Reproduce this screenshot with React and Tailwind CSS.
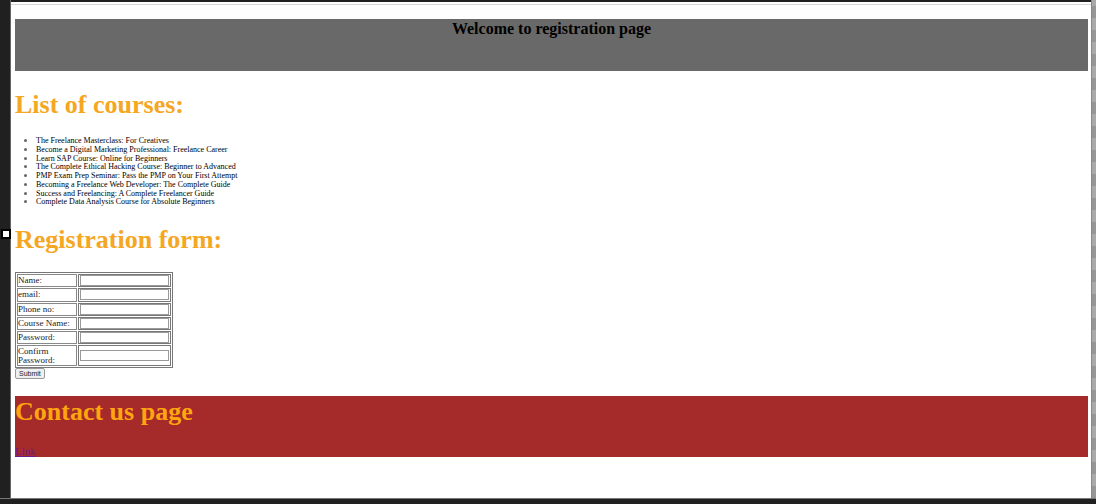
const courses = [
  'The Freelance Masterclass: For Creatives',
  'Become a Digital Marketing Professional: Freelance Career',
  'Learn SAP Course: Online for Beginners',
  'The Complete Ethical Hacking Course: Beginner to Advanced',
  'PMP Exam Prep Seminar: Pass the PMP on Your First Attempt',
  'Becoming a Freelance Web Developer: The Complete Guide',
  'Success and Freelancing: A Complete Freelancer Guide',
  'Complete Data Analysis Course for Absolute Beginners',
];

const fields = [
  { id: 'name', label: 'Name:', type: 'text' },
  { id: 'email', label: 'email:', type: 'email' },
  { id: 'phone', label: 'Phone no:', type: 'tel' },
  { id: 'course', label: 'Course Name:', type: 'text' },
  { id: 'password', label: 'Password:', type: 'password' },
  { id: 'confirm', label: 'Confirm Password:', type: 'password' },
];

function Heading({ children }) {
  return <h1 className="text-[26px] leading-8 font-bold text-[#f5a623]">{children}</h1>;
}

function RegistrationForm() {
  return (
    <form className="mt-4" onSubmit={(e) => e.preventDefault()}>
      <table className="h-[96px] w-[158px] table-fixed border-separate border-spacing-px border border-[#777]">
        <tbody>
          {fields.map((f) => (
            <tr key={f.id}>
              <td className="w-[60px] border border-[#888] align-middle leading-[9px]">
                <label htmlFor={f.id} className="block">{f.label}</label>
              </td>
              <td className="border border-[#777] px-px align-middle">
                <input
                  id={f.id}
                  type={f.type}
                  className="block h-[11px] w-full border border-[#999] bg-white px-px text-[8px] outline-none"
                />
              </td>
            </tr>
          ))}
        </tbody>
      </table>
      <button
        type="submit"
        className="block h-[11px] rounded-xs border border-[#999] bg-[#efefef] px-[3px] font-['Liberation_Sans',sans-serif] text-[7px] leading-[9px] text-[#222]"
      >
        Submit
      </button>
    </form>
  );
}

export default function App() {
  return (
    <div className="flex min-h-screen flex-col bg-[#202020] font-['Liberation_Serif',serif] text-[9px] text-[#222]">
      <div className="flex flex-1">
        <div className="relative w-[11px] shrink-0 border-r border-[#666]">
          <span className="absolute top-[229px] left-px size-[10px] border-2 border-black bg-white" />
        </div>
        <div className="flex flex-1 flex-col">
          <div className="h-[2px] bg-[#202020]" />
          <main className="flex-1 bg-white pr-[3px] pb-[40px]">
            <div className="-mr-[3px] h-[3px] border-b border-[#d8d8d8]" />
            <div className="pt-[14px] pl-1">
              <header className="h-[52px] bg-[#696969]">
                <h2 className="text-center text-base leading-5 font-bold text-black">
                  Welcome to registration page
                </h2>
              </header>
              <section className="pt-[18px]">
                <Heading>List of courses:</Heading>
                <ul className="mt-[15px] grid h-[70px] list-disc grid-rows-8 pl-[21px] text-[8px] leading-[9px] text-black marker:text-[9px] marker:text-[#666]">
                  {courses.map((c) => (
                    <li key={c}>{c}</li>
                  ))}
                </ul>
              </section>
              <section className="pt-[18px]">
                <Heading>Registration form:</Heading>
                <RegistrationForm />
              </section>
              <footer className="mt-[17px] bg-[#a52a2a]">
                <h1 className="text-[26px] leading-8 font-bold text-[#ffa510]">Contact us page</h1>
                <a href="#contact" className="mt-[18px] block w-fit text-[11px] leading-[11px] text-[#6a1b8a] underline">
                  Link
                </a>
              </footer>
            </div>
          </main>
        </div>
        <div className="w-[5px] shrink-0 border-l border-[#888] bg-[repeating-linear-gradient(#a9a9a9_0px,#a9a9a9_6px,#969696_6px,#969696_18px,#a9a9a9_18px,#a9a9a9_24px)]" />
      </div>
      <div className="h-[6px] border-t border-[#777] bg-[#202020]" />
    </div>
  );
}
